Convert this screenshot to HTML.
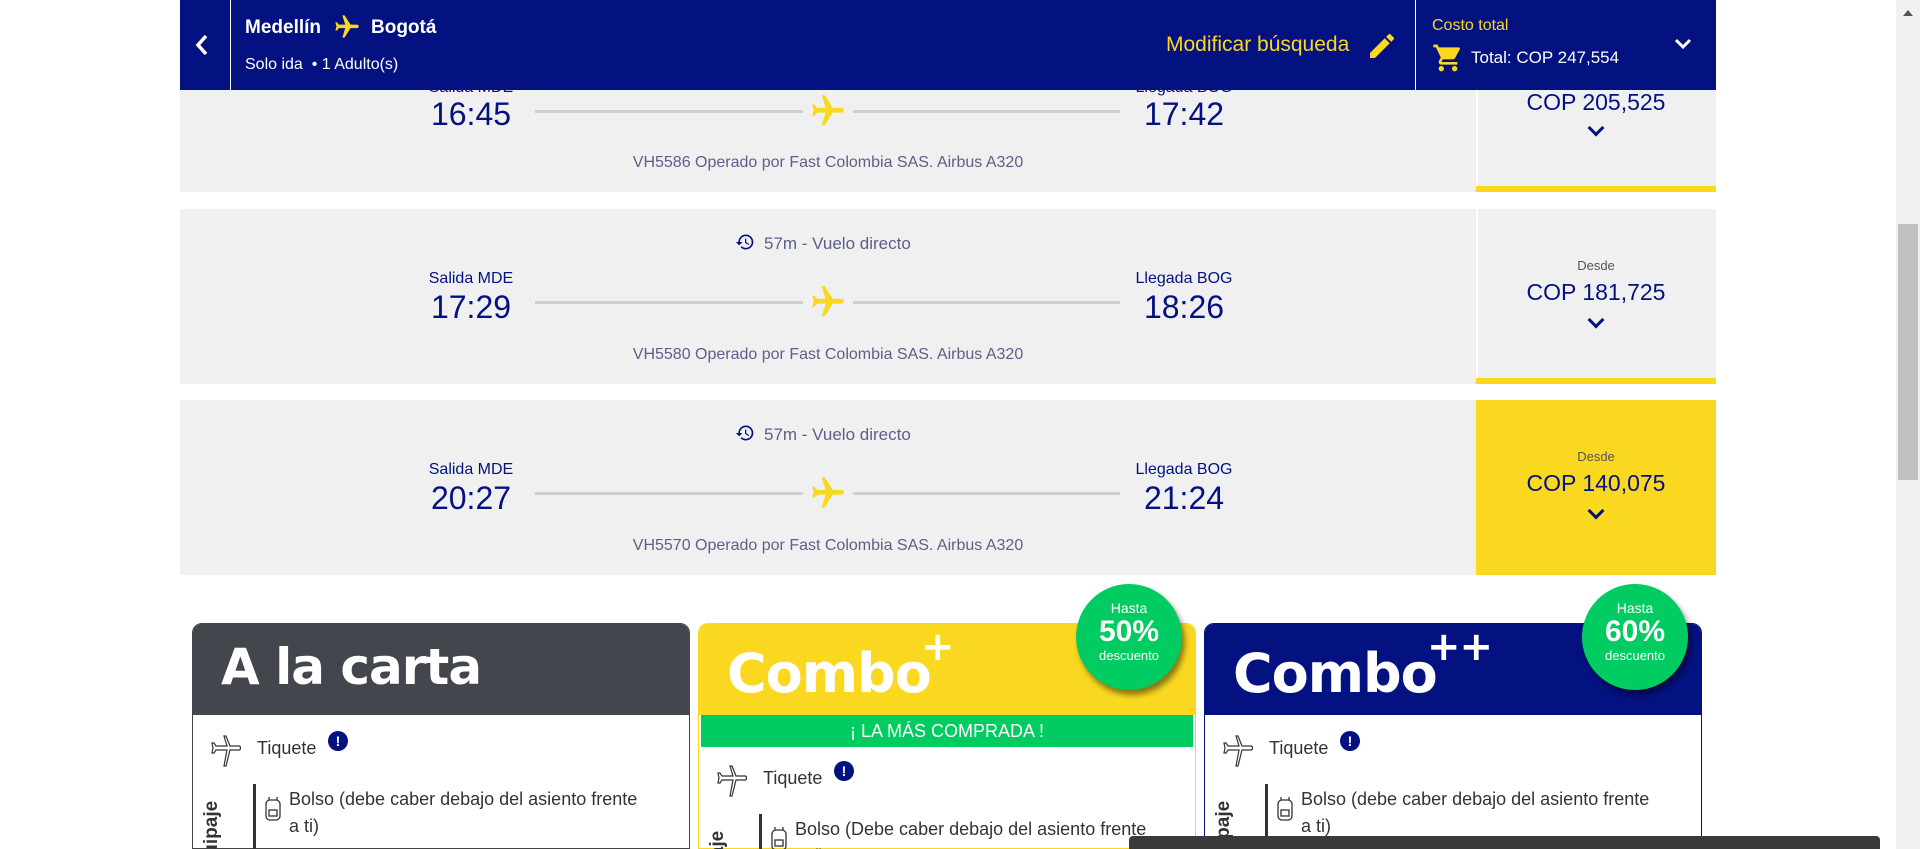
<!DOCTYPE html>
<html><head><meta charset="utf-8"><style>
*{margin:0;padding:0;box-sizing:border-box}
html{width:1920px;height:849px;overflow:hidden}
body{width:1920px;height:849px;overflow:hidden;background:#fff;font-family:"Liberation Sans",sans-serif;position:relative}
.a{position:absolute}
.hdr{left:180px;top:0;width:1536px;height:90px;background:#041180}
.card{left:180px;width:1296px;background:#f0f0f0}
.pc{left:1476px;width:240px;background:#f0f0f0;text-align:center;color:#041180}
.lbl{font-size:16px;color:#041180;width:200px;text-align:center}
.tm{font-size:32px;color:#041180;width:200px;text-align:center}
.ln{height:3px;background:#cfcfcf}
.fn{font-size:16px;color:#5b5f8a;width:600px;text-align:center}
.dur{font-size:17px;color:#5b5f8a}
.chev{width:12px;height:12px;border-right:3px solid #041180;border-bottom:3px solid #041180;transform:rotate(45deg)}
.combo{width:498px;height:226px;border-radius:10px 10px 0 0;overflow:hidden}
.ch{height:91px;position:relative}
.body{background:#fff;height:200px;position:relative}
.txt{font-size:18px;color:#333}
.badge{width:106px;height:106px;border-radius:50%;background:#00cc61;color:#fff;text-align:center;box-shadow:3px 5px 6px rgba(0,0,0,.45)}
.title{font-weight:bold;color:#fff;font-size:54px;font-family:"DejaVu Sans","Liberation Sans",sans-serif;letter-spacing:-1px}
.info{width:20px;height:20px;border-radius:50%;background:#041180;color:#fff;font-size:14px;font-weight:bold;text-align:center;line-height:20px}
</style></head><body>

<!-- flight card 1 (partially hidden) -->
<div class="a card" style="top:80px;height:112px"></div>
<div class="a pc" style="top:80px;height:112px;border-left:2px solid #fff"></div>
<div class="a" style="left:1476px;top:186px;width:240px;height:6px;background:#fad820"></div>
<div class="a lbl" style="left:371px;top:79px">Salida MDE</div>
<div class="a lbl" style="left:1084px;top:79px">Llegada BOG</div>
<div class="a tm" style="left:371px;top:96px">16:45</div>
<div class="a tm" style="left:1084px;top:96px">17:42</div>
<div class="a ln" style="left:535px;top:110px;width:268px"></div>
<div class="a ln" style="left:853px;top:110px;width:267px"></div>
<svg class="a" style="left:808px;top:92px" width="40" height="38" viewBox="0 0 24 24"><path fill="#fad820" d="M21 16v-2l-8-5V3.5c0-.83-.67-1.5-1.5-1.5S10 2.67 10 3.5V9l-8 5v2l8-2.5V19l-2 1.5V22l3.5-1 3.5 1v-1.5L13 19v-5.5l8 2.5z" transform="rotate(90 12 12)"/></svg>
<div class="a fn" style="left:528px;top:154px">VH5586 Operado por Fast Colombia SAS. Airbus A320</div>
<div class="a" style="left:1476px;top:89px;width:240px;text-align:center;font-size:23px;color:#041180">COP 205,525</div>
<div class="a chev" style="left:1590px;top:122px"></div>

<!-- flight card 2 -->
<div class="a card" style="top:209px;height:175px"></div>
<div class="a pc" style="top:209px;height:175px;border-left:2px solid #fff"></div>
<div class="a" style="left:1476px;top:378px;width:240px;height:6px;background:#fad820"></div>

<!-- flight card 3 -->
<div class="a card" style="top:400px;height:175px"></div>
<div class="a pc" style="top:400px;height:175px;background:#fad820"></div>

<div id="c2"></div>

<!-- header -->
<div class="a hdr"></div>
<div class="a" style="left:230px;top:0;width:1px;height:90px;background:#fff"></div>
<div class="a" style="left:1415px;top:0;width:1px;height:90px;background:#fff"></div>
<svg class="a" style="left:195px;top:33px" width="14" height="24" viewBox="0 0 14 24"><path d="M11 3 3 12l8 9" stroke="#fff" stroke-width="3.5" fill="none"/></svg>
<div class="a" style="left:245px;top:17px;color:#fff;font-weight:bold;font-size:19px">Medellín</div>
<svg class="a" style="left:332px;top:13px" width="30" height="28" viewBox="0 0 24 24"><path fill="#fad820" d="M21 16v-2l-8-5V3.5c0-.83-.67-1.5-1.5-1.5S10 2.67 10 3.5V9l-8 5v2l8-2.5V19l-2 1.5V22l3.5-1 3.5 1v-1.5L13 19v-5.5l8 2.5z" transform="rotate(90 12 12)"/></svg>
<div class="a" style="left:371px;top:17px;color:#fff;font-weight:bold;font-size:19px">Bogotá</div>
<div class="a" style="left:245px;top:56px;color:#fff;font-size:16px">Solo ida &nbsp;• 1 Adulto(s)</div>
<div class="a" style="left:1166px;top:33px;color:#fad820;font-size:21px">Modificar búsqueda</div>
<svg class="a" style="left:1366px;top:30px" width="32" height="32" viewBox="0 0 24 24"><path fill="#fad820" d="M3 17.25V21h3.75L17.81 9.94l-3.75-3.75L3 17.25zM20.71 7.04a1 1 0 0 0 0-1.41l-2.34-2.34a1 1 0 0 0-1.41 0l-1.83 1.83 3.75 3.75 1.83-1.83z"/></svg>
<div class="a" style="left:1432px;top:17px;color:#fad820;font-size:16px">Costo total</div>
<svg class="a" style="left:1432px;top:42px" width="32" height="32" viewBox="0 0 24 24"><path fill="#fad820" d="M7 18c-1.1 0-2 .9-2 2s.9 2 2 2 2-.9 2-2-.9-2-2-2zM1 2v2h2l3.6 7.59-1.35 2.45c-.16.28-.25.61-.25.96 0 1.1.9 2 2 2h12v-2H7.42a.25.25 0 0 1-.25-.25l.03-.12.9-1.63h7.45c.75 0 1.41-.41 1.75-1.03l3.58-6.49A1 1 0 0 0 20 4H5.21l-.94-2H1zm16 16c-1.1 0-2 .9-2 2s.9 2 2 2 2-.9 2-2-.9-2-2-2z"/></svg>
<div class="a" style="left:1471px;top:48px;color:#fff;font-size:17px">Total: COP 247,554</div>
<svg class="a" style="left:1674px;top:38px" width="18" height="12" viewBox="0 0 18 12"><path d="M2 2l7 7 7-7" stroke="#fff" stroke-width="3" fill="none"/></svg>

<!-- combos -->
<div class="a combo" style="left:192px;top:623px;border:1px solid #444">
 <div class="ch" style="background:#43474d"><div class="a title" style="left:28px;top:14px;font-size:50px">A la carta</div></div>
 <div class="body"></div>
</div>
<div class="a combo" style="left:698px;top:623px;border:1px solid #fad820">
 <div class="ch" style="background:#fad820"><div class="a title" style="left:28px;top:18px">Combo</div><div class="a title" style="left:222px;top:0px;font-size:40px">+</div></div>
 <div style="height:32px;background:#00cc61;color:#fff;text-align:center;font-size:18px;line-height:32px;margin:0 2px">¡ LA MÁS COMPRADA !</div>
 <div class="body"></div>
</div>
<div class="a combo" style="left:1204px;top:623px;border:1px solid #041180">
 <div class="ch" style="background:#041180"><div class="a title" style="left:28px;top:18px">Combo</div><div class="a title" style="left:222px;top:0px;font-size:40px">++</div></div>
 <div class="body"></div>
</div>

<div id="rows"></div>

<div class="a badge" style="left:1076px;top:584px"><div style="font-size:14px;margin-top:16px">Hasta</div><div style="font-size:30px;font-weight:bold;line-height:32px">50%</div><div style="font-size:13px">descuento</div></div>
<div class="a badge" style="left:1582px;top:584px"><div style="font-size:14px;margin-top:16px">Hasta</div><div style="font-size:30px;font-weight:bold;line-height:32px">60%</div><div style="font-size:13px">descuento</div></div>

<!-- scrollbar -->
<div class="a" style="left:1896px;top:0;width:24px;height:849px;background:#f1f1f1"></div>
<div class="a" style="left:1898px;top:224px;width:20px;height:256px;background:#c1c1c1"></div>
<div class="a" style="left:1903px;top:10px;width:0;height:0;border-left:5px solid transparent;border-right:5px solid transparent;border-bottom:6px solid #555"></div>
<div class="a" style="left:1129px;top:836px;width:751px;height:13px;background:#3a3a3a;border-radius:4px 4px 0 0"></div>

<script>
var h='';
[[209,'17:29','18:26','VH5580','COP 181,725'],[400,'20:27','21:24','VH5570','COP 140,075']].forEach(function(c){
var t=c[0];
h+='<svg class="a" style="left:735px;top:'+(t+23)+'px" width="20" height="20" viewBox="0 0 24 24"><path fill="#041180" d="M13 3a9 9 0 0 0-9 9H1l3.89 3.89.07.14L9 12H6c0-3.87 3.13-7 7-7s7 3.13 7 7-3.13 7-7 7c-1.93 0-3.68-.79-4.94-2.06l-1.42 1.42A8.95 8.95 0 0 0 13 21a9 9 0 0 0 0-18zm-1 5v5l4.28 2.54.72-1.21-3.5-2.08V8H12z"/></svg>';
h+='<div class="a dur" style="left:764px;top:'+(t+25)+'px">57m - Vuelo directo</div>';
h+='<div class="a lbl" style="left:371px;top:'+(t+61)+'px">Salida MDE</div>';
h+='<div class="a lbl" style="left:1084px;top:'+(t+61)+'px">Llegada BOG</div>';
h+='<div class="a tm" style="left:371px;top:'+(t+80)+'px">'+c[1]+'</div>';
h+='<div class="a tm" style="left:1084px;top:'+(t+80)+'px">'+c[2]+'</div>';
h+='<div class="a ln" style="left:535px;top:'+(t+92)+'px;width:268px"></div><div class="a ln" style="left:853px;top:'+(t+92)+'px;width:267px"></div>';
h+='<svg class="a" style="left:808px;top:'+(t+74)+'px" width="40" height="38" viewBox="0 0 24 24"><path fill="#fad820" d="M21 16v-2l-8-5V3.5c0-.83-.67-1.5-1.5-1.5S10 2.67 10 3.5V9l-8 5v2l8-2.5V19l-2 1.5V22l3.5-1 3.5 1v-1.5L13 19v-5.5l8 2.5z" transform="rotate(90 12 12)"/></svg>';
h+='<div class="a fn" style="left:528px;top:'+(t+137)+'px">'+c[3]+' Operado por Fast Colombia SAS. Airbus A320</div>';
h+='<div class="a" style="left:1476px;top:'+(t+49)+'px;width:240px;text-align:center;font-size:13px;color:#555">Desde</div>';
h+='<div class="a" style="left:1476px;top:'+(t+70)+'px;width:240px;text-align:center;font-size:23px;color:#041180">'+c[4]+'</div>';
h+='<div class="a chev" style="left:1590px;top:'+(t+105)+'px"></div>';
});
document.getElementById('c2').outerHTML=h;
var r='';
[[192,748,'debe'],[698,778,'Debe'],[1204,748,'debe']].forEach(function(c){
var x=c[0],y=c[1];
r+='<svg class="a" style="left:'+(x+18)+'px;top:'+(y-14)+'px" width="32" height="34" viewBox="0 0 32 34" fill="none" stroke="#333" stroke-width="1.2"><path d="M16 2l4 10h9c2 0 2 4 0 4h-9l-4 16h-2l3-16H6l-2 3H2l1-5-1-5h2l2 3h11L14 2z"/></svg>';
r+='<div class="a txt" style="left:'+(x+65)+'px;top:'+(y-10)+'px">Tiquete</div>';
r+='<div class="a info" style="left:'+(x+136)+'px;top:'+(y-17)+'px">!</div>';
r+='<div class="a" style="left:'+(x+61)+'px;top:'+(y+36)+'px;width:3px;height:80px;background:#333"></div>';
r+='<svg class="a" style="left:'+(x+72)+'px;top:'+(y+46)+'px" width="18" height="28" viewBox="0 0 18 28" fill="none" stroke="#333" stroke-width="1.3"><rect x="2" y="6" width="14" height="20" rx="4"/><rect x="5" y="16" width="8" height="6"/><path d="M5 6V3M13 6V3"/></svg>';
r+='<div class="a txt" style="left:'+(x+97)+'px;top:'+(y+38)+'px;width:360px;line-height:27px">Bolso ('+c[2]+' caber debajo del asiento frente a ti)</div>';
r+='<div class="a" style="left:'+(x+9)+'px;top:'+(y+132)+'px;font-weight:bold;font-size:19px;color:#333;transform:rotate(-90deg);transform-origin:left top;white-space:nowrap">Equipaje</div>';
});
document.getElementById('rows').outerHTML=r;
</script>
</body></html>
